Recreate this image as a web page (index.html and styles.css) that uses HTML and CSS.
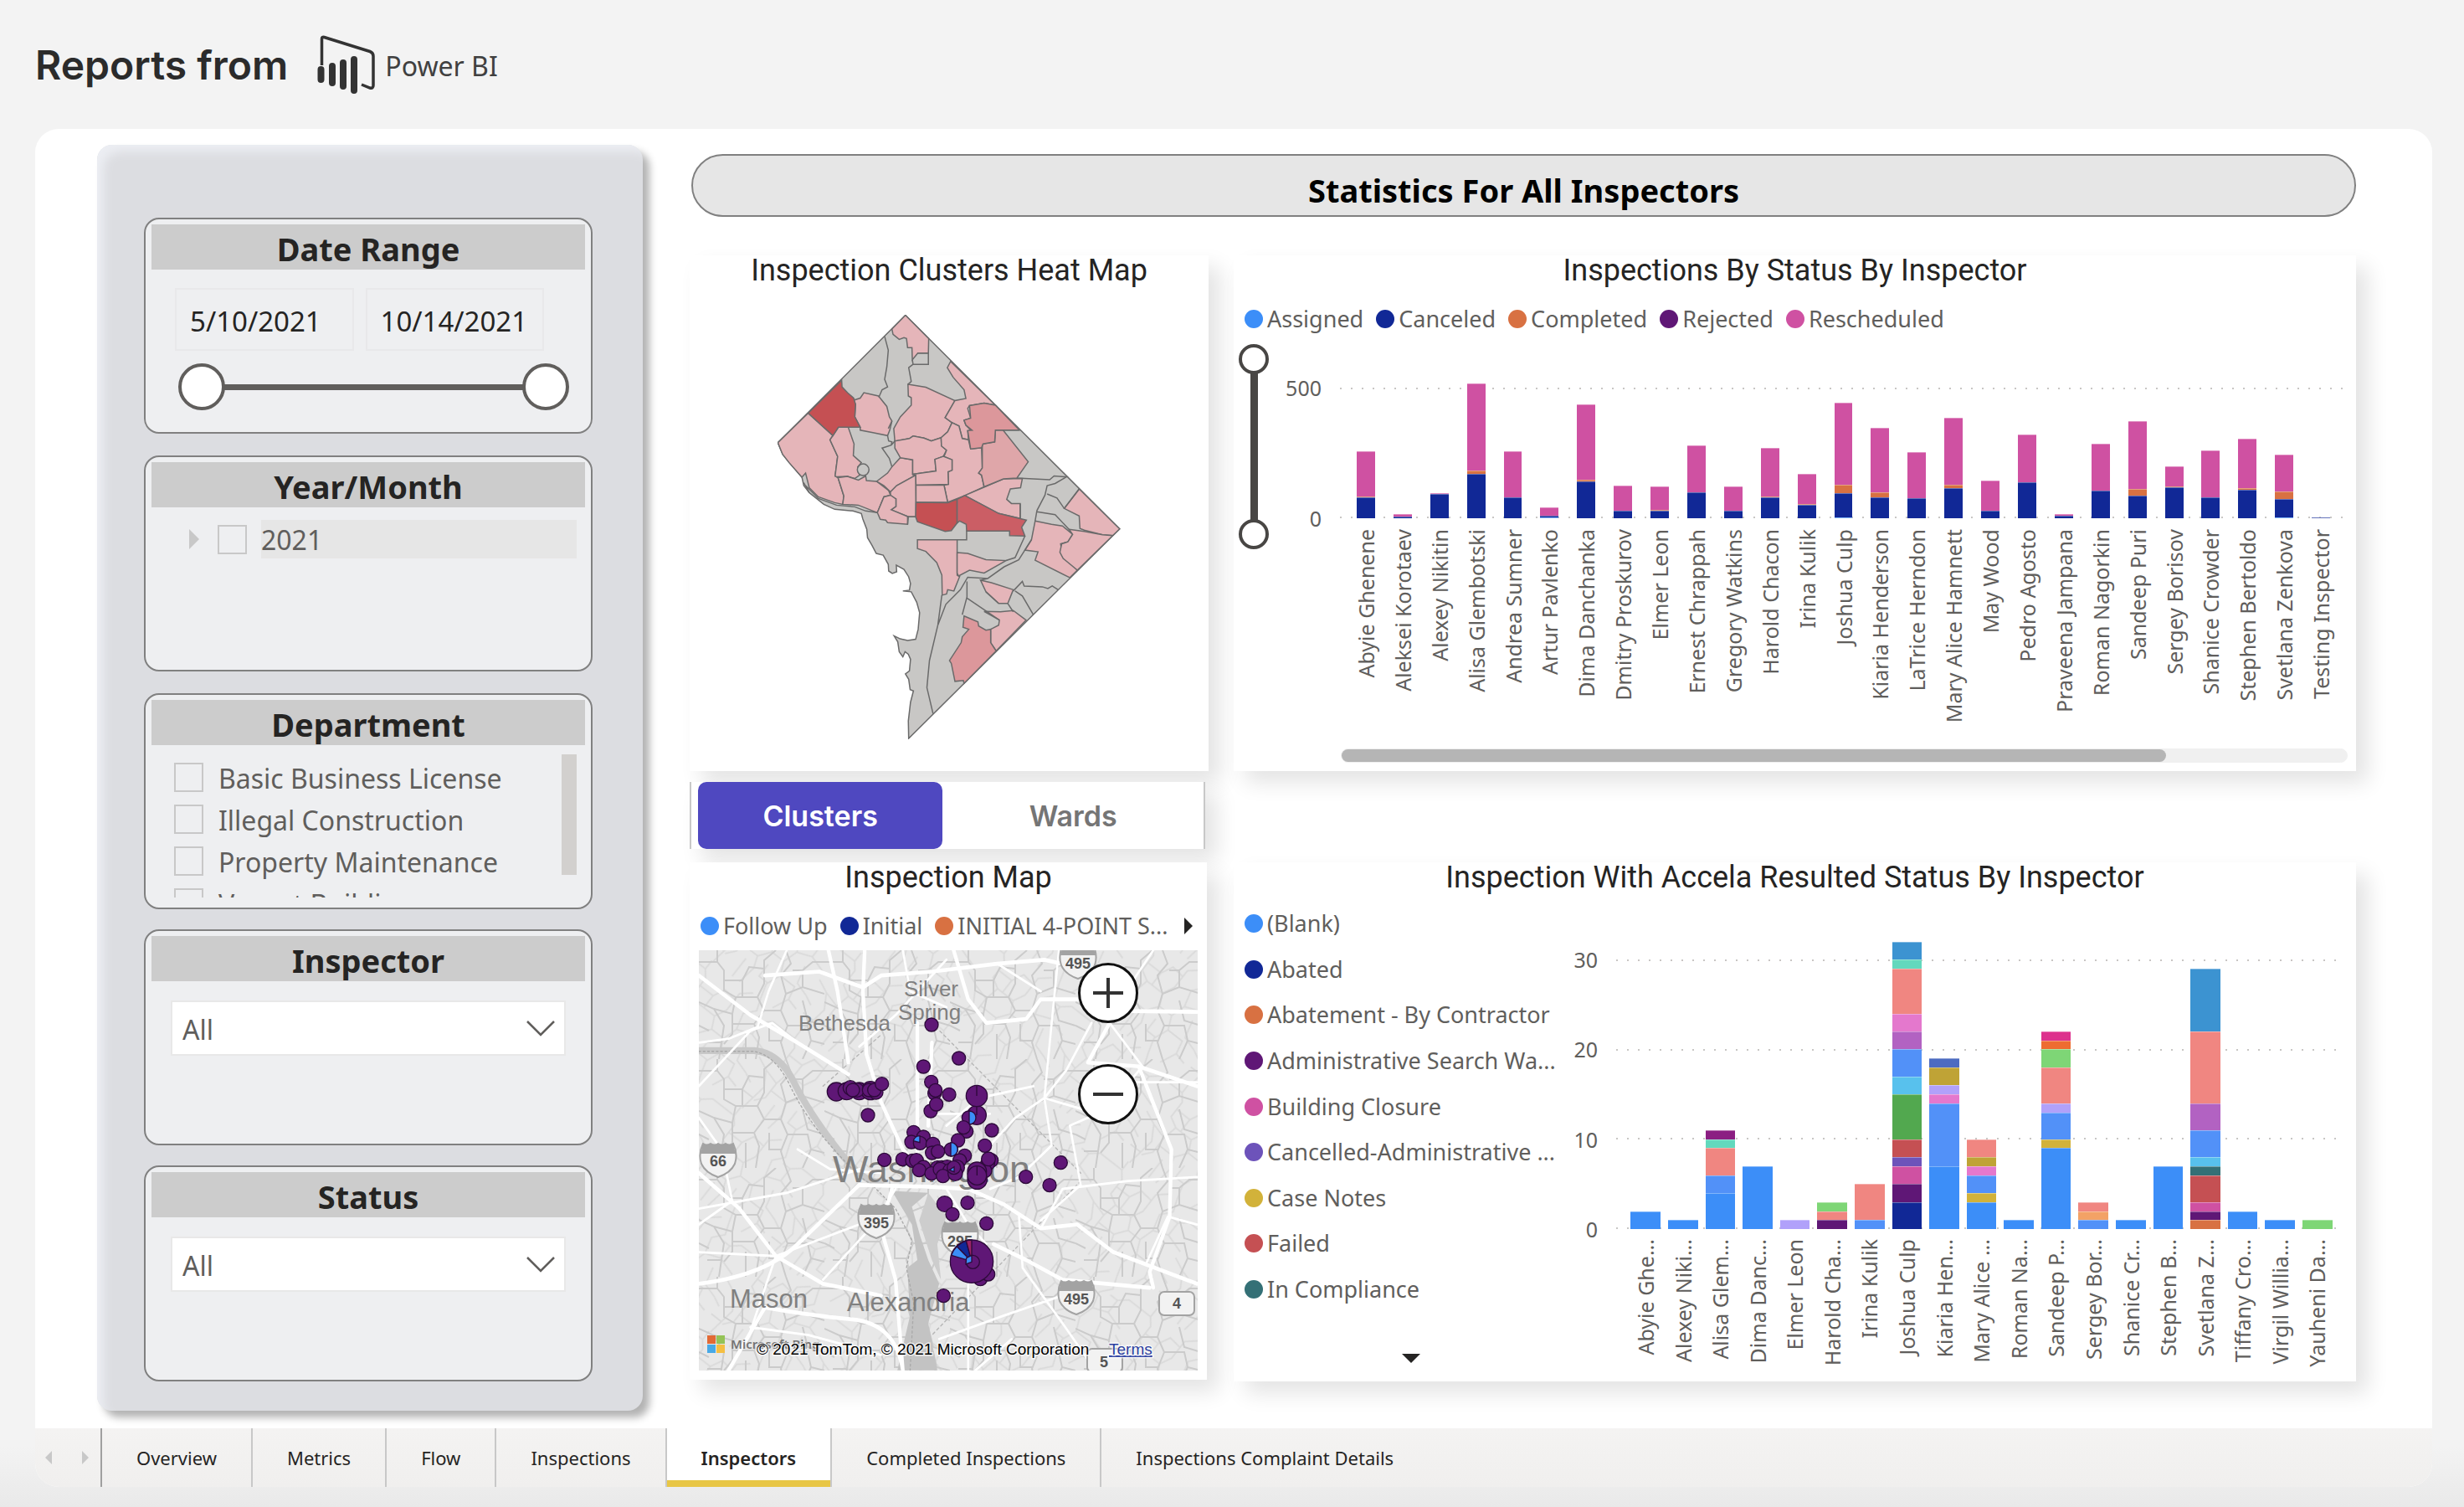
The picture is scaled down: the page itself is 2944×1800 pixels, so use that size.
FILE: index.html
```html
<!DOCTYPE html>
<html lang="en">
<head>
<meta charset="utf-8">
<meta name="viewport" content="width=device-width, initial-scale=1">
<title>Reports from Power BI</title>
<link rel="stylesheet" href="styles.css">
</head>
<body>
<header class="page-header">
  <h1>Reports from</h1>
  <div class="brand">
    <svg class="brand-logo" width="72" height="72" viewBox="0 0 72 72" aria-hidden="true">
      <path d="M6.500 36V4.500Q6.500 1.500 9.500 2.500L64 19.500Q68 21 68 25V60Q68 64 64 63L54 59" fill="none" stroke="#333" stroke-width="3.500"/>
      <g stroke="#333" stroke-width="8" stroke-linecap="round">
        <path d="M5.500 41V53M19 37V57M32 33V61M45 29V66"/>
      </g>
    </svg>
    <span>Power BI</span>
  </div>
</header>

<main class="report">
  <div class="canvas">
    <aside class="filters">
      <section class="filter">
        <h2>Date Range</h2>
        <div class="dates">
          <input type="text" value="5/10/2021" aria-label="Start date">
          <input type="text" value="10/14/2021" aria-label="End date">
        </div>
        <div class="range range-wide">
          <input type="range" min="0" max="100" value="0" aria-label="Range start">
          <input type="range" min="0" max="100" value="100" aria-label="Range end">
        </div>
      </section>

      <section class="filter">
        <h2>Year/Month</h2>
        <div class="tree-row">
          <button type="button" class="expander" aria-label="Expand 2021"></button>
          <input type="checkbox" id="y2021">
          <label for="y2021">2021</label>
        </div>
      </section>

      <section class="filter">
        <h2>Department</h2>
        <div class="dept">
          <ul>
            <li><input type="checkbox" id="d1"><label for="d1">Basic Business License</label></li>
            <li><input type="checkbox" id="d2"><label for="d2">Illegal Construction</label></li>
            <li><input type="checkbox" id="d3"><label for="d3">Property Maintenance</label></li>
            <li><input type="checkbox" id="d4"><label for="d4">Vacant Building</label></li>
          </ul>
          <div class="dept-scroll"></div>
        </div>
      </section>

      <section class="filter filter-tight">
        <h2 id="inspector-title">Inspector</h2>
        <div class="dropdown">
          <select aria-labelledby="inspector-title"><option>All</option></select>
          <svg width="36" height="20" viewBox="0 0 36 20" aria-hidden="true"><path d="M2 2L18 18L34 2" fill="none" stroke="#605e5c" stroke-width="2.500"/></svg>
        </div>
      </section>

      <section class="filter filter-tight">
        <h2 id="status-title">Status</h2>
        <div class="dropdown">
          <select aria-labelledby="status-title"><option>All</option></select>
          <svg width="36" height="20" viewBox="0 0 36 20" aria-hidden="true"><path d="M2 2L18 18L34 2" fill="none" stroke="#605e5c" stroke-width="2.500"/></svg>
        </div>
      </section>
    </aside>

    <div class="dashboard">
      <div class="banner">Statistics For All Inspectors</div>

      <div class="columns">
        <div class="column">
          <section class="card heat">
            <h3>Inspection Clusters Heat Map</h3>
            <svg class="heat-map" viewBox="278 435 940 1019" preserveAspectRatio="none" role="img" aria-label="Clusters heat map">
              <path class="base" d="M629 436L1217 949L638 1452L637 1410L643 1365L651 1338L642 1335L638 1310L629 1297L640 1290L643 1262L637 1250L628 1244L622 1256L612 1244L608 1220L598 1206L615 1213L635 1217L657 1214L664 1190L668 1150L660 1125L645 1100L622 1098L640 1096L643 1080L638 1064L625 1046L604 1036L605 1052L593 1056L583 1050L582 1034L568 1012L549 1008L537 988L525 970L523 950L512 925L508 912L485 906L435 902L405 890L365 862L350 845L345 825L310 790L292 770L279 742Z"/>
              <g class="low">
                <path d="M629 436L693 492L692 527L663 527L648 543L647 514L635 514L632 492L625 490L612 494L595 482L592 469Z"/>
                <path d="M636 602L685 609L765 641L738 682L757 694L745 716L727 730L700 738L680 731L650 726L640 732L606 738L600 738L597 708L615 680L645 652V634L637 630Z"/>
                <path d="M753 547L876 652L845 647L805 653L800 660L808 683L790 688L795 700L808 712L800 713L802 735L785 732L776 702L757 694L738 682L765 641L795 636L790 615L760 585L744 562Z"/>
                <path d="M487 640L505 635L515 622L555 630L578 655L585 680L592 690L586 712L580 725L540 718L505 712V705L490 680L492 650Z"/>
                <path d="M362 671L430 725L422 735L443 775L436 822L444 826L460 870L457 890L435 886L390 872L365 850L355 815L345 825L310 790L292 770L279 742Z"/>
                <path d="M430 725L445 705H472L488 745L486 773L508 790L498 800L503 820L490 828L470 823L440 824L436 822L443 775L422 735Z"/>
                <path d="M444 826L470 823L500 832L520 822L522 833L550 835L583 857L588 868L570 872L552 910L500 892L457 890L460 870Z"/>
                <path d="M550 835L580 815L592 800L615 778L649 783V818L657 820L605 845L588 860L570 845Z"/>
                <path d="M600 738L640 732L650 726L680 731L700 738L727 730L728 750L742 760L733 775L710 782L713 810L649 818V783L615 778L600 755Z"/>
                <path d="M727 730L745 716L757 694L776 702L785 732L802 735L808 757L838 754L840 803L830 815L838 820L845 848L792 869L745 885L735 844L747 842L746 812L757 808V783L735 775L742 760L728 750Z"/>
                <path d="M649 818L713 810L710 782L733 775L757 783V808L746 812L747 842L658 844L657 820Z"/>
                <path d="M658 844H735L745 885H658Z"/>
                <path d="M657 820L658 920H637L590 903L603 895V877L588 873L588 860L605 845Z"/>
                <path d="M588 868L603 877V895L590 903L637 920L635 938L580 934L575 928L560 926L552 910L570 872Z"/>
                <path d="M792 869L898 829L950 828L945 850L917 853L907 878L920 888L944 888V924L885 912Z"/>
                <path d="M662 975H771V1060L778 1063L762 1098L745 1095L742 1105L730 1108L729 1060L715 1030L685 1003L662 996Z"/>
                <path d="M771 1006L800 1008L850 1023L905 1025L845 1055L805 1048L775 1062L771 1055Z"/>
                <path d="M1106 853L1217 949L1198 965L1170 963L1120 952L1108 948L1106 918L1065 900Z"/>
                <path d="M985 930L1030 938L1060 942L1088 962L1075 980L1055 985L1060 1010L1101 1048L1080 1066L985 1024L993 1004L957 1000L975 975Z"/>
                <path d="M1078 950L1120 955L1170 963L1198 965L1101 1048L1062 1020L1053 1005L1058 985L1075 980L1088 962Z"/>
                <path d="M835 1072L865 1078L925 1095L910 1128H885L850 1100Z"/>
                <path d="M845 1147L890 1148L925 1145L960 1168L878 1242L863 1222V1190L885 1180L887 1168Z"/>
              </g>
              <path class="mid" d="M876 712H897L966 788L935 827L898 829L845 848L838 820L830 815L840 803V745L874 740Z"/>
              <path class="mid-2" d="M805 653L845 647L876 652L942 712H876L874 740L842 745L838 754L808 757L800 713L812 712L795 700L790 688L808 683Z"/>
              <path class="mid-2" d="M790 1158L828 1172L830 1182L850 1192L863 1190V1222L878 1242L790 1320L788 1313L765 1315L755 1272L750 1265L782 1222L785 1208L803 1190L787 1185Z"/>
              <path class="high" d="M454 592L455 608L470 622L487 635L492 650L490 680L505 705H445L430 725L362 671Z"/>
              <path class="high" d="M658 885L745 886L771 878V935L755 953L738 955L662 932L657 920Z"/>
              <path class="high-2" d="M771 878L792 869L885 912L961 928L948 945L957 966L915 965V954H797L796 938L778 930L771 935Z"/>
              <path class="line" d="M663 527L692 527V554H650L648 543M572 487L582 520L578 560L572 590L580 608L565 615L556 633M650 554L638 562L645 595L636 602M580 725L583 738L592 740L590 748L565 755L585 780L592 800M600 738L590 748M592 690L582 708M897 712H942M935 827L1025 831L1037 822L1071 824L1040 840L1018 845L1012 868L990 905L985 930M1018 865L1045 875L1065 900M1106 853L1065 900M990 908L1040 915L1078 950M797 954V975H771M957 966L930 1018L905 1025M975 975L940 1023L900 1040L855 1068L800 1065L780 1095L740 1130L718 1180M798 1075V1112L785 1155M798 1115L887 1168M855 1068L835 1072M925 1098L950 1075L955 1086L1005 1088L1020 1092L1032 1086L1048 1095M930 1098L950 1110L980 1155M910 1128L925 1148M850 1100L885 1128M729 1108L718 1180L695 1265L688 1330L705 1393M944 888V924M365 862L350 838M355 845L390 876L440 892L490 896L520 906L552 910M635 938V920H658"/>
              <ellipse class="base" cx="513" cy="807" rx="16" ry="14"/>
            </svg>
          </section>

          <div class="card toggle" role="group" aria-label="Map grouping">
            <button type="button" class="is-on" aria-pressed="true">Clusters</button>
            <button type="button" aria-pressed="false">Wards</button>
          </div>

          <section class="card map-card">
            <h3>Inspection Map</h3>
            <div class="legend map-legend">
              <span class="key c-blue">Follow Up</span>
              <span class="key c-navy">Initial</span>
              <span class="key c-orange">INITIAL 4-POINT S...</span>
              <button type="button" class="next" aria-label="More legend items"></button>
            </div>
            <div class="map">
              <svg viewBox="0 0 596 502" role="img" aria-label="Map of inspections around Washington">
                <defs>
                  <pattern id="streets" width="150" height="130" patternUnits="userSpaceOnUse">
                    <path d="M0 14H22L30 24V48L44 56H70L78 40V12L92 0M22 14V0M30 36H52V56M52 36L60 20L78 22M0 62L18 70L30 90L24 130M18 70L40 76L44 56M40 76V100L30 112M40 88H66L72 104L68 130M66 88L78 72L70 56M78 72H98L106 90L98 110L104 130M98 72L104 52L124 44L150 52M104 52L98 30L110 16L104 0M124 44V24L136 14H150M124 60L130 84L150 90M106 90H130L134 108L150 112M134 108L124 130M84 88V108H98M0 90L12 96M10 110H27M112 24H124M56 100V130" fill="none" stroke="#cbcbcb" stroke-width="2"/>
                  </pattern>
                  <pattern id="lanes" href="#streets" patternTransform="rotate(38) scale(.9)"/>
                  <g id="interstate">
                    <path d="M-18 -20Q-14 -17 -9 -20Q-4 -17 0 -20Q4 -17 9 -20Q14 -17 18 -20Q24 -8 20 4Q15 15 0 20Q-15 15 -20 4Q-24 -8 -18 -20Z" fill="#f2f2f2" stroke="#a3a3a3" stroke-width="2"/>
                    <path d="M-18 -20Q-14 -17 -9 -20Q-4 -17 0 -20Q4 -17 9 -20Q14 -17 18 -20L21 -8H-21Z" fill="#a3a3a3"/>
                  </g>
                </defs>
                <rect width="596" height="502" fill="#e8e8e8"/>
                <rect width="596" height="502" fill="url(#streets)"/>
                <rect width="596" height="502" fill="url(#lanes)" opacity=".5"/>
                <g transform="scale(.43367 .47194) translate(-58 -456)" fill="none" stroke-linecap="round" stroke-linejoin="round">
                  <path d="M58 710H210Q280 715 320 790T440 960T560 1040" stroke="#c8c8c8" stroke-width="18"/>
                  <path d="M590 1065L690 1070L645 1105L668 1180L690 1240L720 1300L690 1400L715 1519H605L640 1380L632 1260L660 1240L645 1150Z" fill="#c3c3c3"/>
                  <path d="M690 1070L740 1130L715 1200L725 1290L700 1240L665 1140Z" fill="#cdcdcd"/>
                  <path d="M58 712H210Q270 722 310 800T430 960T530 1045L600 1110L645 1190L630 1260L650 1350L640 1519" stroke="#a9a9a9" stroke-width="3" stroke-dasharray="5 7"/>
                  <path d="M400 800L560 670M700 640L1110 1020M1110 1040L700 1430" stroke="#b5b5b5" stroke-width="3" stroke-dasharray="7 8"/>
                  <g stroke="#fff" stroke-width="10">
                    <path d="M58 520L200 620L330 690L470 770M415 456L440 560L470 740M515 456L510 560L520 720L560 840L620 960L670 1010M660 640V990M700 690L690 900M58 1020L170 1110L270 1230L400 1300L560 1330M58 1300Q240 1280 330 1200T500 1050L700 1055L800 1060L900 1100L1000 1160L1100 1150L1200 1220L1430 1300M590 1060L560 1160L600 1290L620 1519M620 1519Q600 1400 480 1390T240 1360L140 1519"/>
                    <path d="M240 520L390 510L510 550L560 520L700 510L880 490L1010 480L1200 520M760 456L800 580L850 640L960 630L1000 580L1100 580L1250 610L1430 612M1190 640L1130 740L1270 750L1360 960L1355 1130L1300 1270L1310 1310M1270 750L1430 800M870 1200L960 1240L1060 1290L1300 1310"/>
                  </g>
                  <g stroke="#fff" stroke-width="6">
                    <path d="M300 456L250 560L220 650L140 680L58 690M620 456L640 560L740 600M740 480L600 620L500 700M1050 456L1030 640L1010 830M1140 640L1070 760L1010 830L930 880L850 960M1010 830L1120 860L1200 790L1430 790M1010 830L1030 950L940 1030L860 1060M1190 640L1280 750L1180 860L1080 900M1310 456L1220 580M58 880L120 960L150 1090L58 1150M58 1110L300 1070L500 1010M330 960L420 1010L560 1020M58 1220L270 1230L500 1150M270 1230L200 1420M400 1290L540 1150L600 1060M740 1060L800 1150L850 1200M1000 1160L1060 1060L1240 1040L1430 1030M940 1130L950 1260L1060 1400L1150 1519M800 1290V1519M720 1440L900 1380L1060 1330M1430 1150L1350 1130L1290 1250M560 1480L360 1430L200 1410M920 1440L820 1519M58 800L200 660L260 640L330 690M1080 900L1110 1050L1000 1140M880 490L1000 560M700 870H860M740 900L830 830L980 800"/>
                  </g>
                </g>
                <g class="places">
                  <text x="245" y="55" font-size="26">Silver</text>
                  <text x="238" y="83" font-size="26">Spring</text>
                  <text x="119" y="96" font-size="26">Bethesda</text>
                  <text x="160" y="277" font-size="45">Washington</text>
                  <text x="37" y="427" font-size="31">Mason</text>
                  <text x="177" y="431" font-size="31">Alexandria</text>
                </g>
                <use href="#interstate" x="23" y="251"/>
                <use href="#interstate" x="212" y="324"/>
                <use href="#interstate" x="312" y="345"/>
                <use href="#interstate" x="451" y="415"/>
                <use href="#interstate" x="453" y="14"/>
                <rect x="550" y="408" width="42" height="28" rx="6" fill="#f2f2f2" stroke="#a3a3a3" stroke-width="2"/>
                <rect x="464" y="476" width="42" height="28" rx="6" fill="#f2f2f2" stroke="#a3a3a3" stroke-width="2"/>
                <g class="routes">
                  <text x="23" y="258">66</text>
                  <text x="212" y="332">395</text>
                  <text x="312" y="354">295</text>
                  <text x="451" y="423">495</text>
                  <text x="453" y="22">495</text>
                  <text x="571" y="428">4</text>
                  <text x="484" y="498">5</text>
                </g>
                <g class="pins" transform="translate(145 145) scale(.33333)">
                  <circle cx="399" cy="-168" r="24"/><circle cx="497" cy="-48" r="24"/><circle cx="370" cy="-18" r="24"/>
                  <circle cx="58" cy="72" r="33"/><circle cx="95" cy="70" r="31"/><circle cx="140" cy="70" r="31"/><circle cx="180" cy="68" r="33"/><circle cx="200" cy="74" r="25"/><circle cx="108" cy="58" r="26"/><circle cx="132" cy="66" r="25"/><circle cx="175" cy="66" r="24"/><circle cx="194" cy="66" r="24"/><circle cx="117" cy="66" r="24"/><circle cx="221" cy="44" r="24"/><circle cx="171" cy="156" r="24"/>
                  <circle cx="398" cy="37" r="24"/><circle cx="410" cy="78" r="24"/><circle cx="413" cy="67" r="24"/><circle cx="462" cy="82" r="24"/><circle cx="396" cy="141" r="24"/><circle cx="416" cy="117" r="24"/>
                  <circle cx="561" cy="156" r="34"/><path d="M561 156V122"/><circle cx="561" cy="87" r="38"/><path d="M561 87V49"/>
                  <circle cx="532" cy="165" r="24"/><path class="blue" d="M534 141A24 24 0 0 1 534 189Z"/>
                  <circle cx="524" cy="214" r="24"/><circle cx="514" cy="200" r="24"/><circle cx="615" cy="210" r="24"/><circle cx="590" cy="265" r="24"/><circle cx="494" cy="246" r="24"/>
                  <circle cx="335" cy="217" r="24"/><circle cx="370" cy="234" r="24"/><circle cx="327" cy="252" r="24"/><circle cx="358" cy="256" r="24"/><path class="blue" d="M357 254V230A24 24 0 0 0 334 248Z"/>
                  <circle cx="404" cy="260" r="25"/><circle cx="401" cy="291" r="24"/><circle cx="422" cy="286" r="24"/><circle cx="469" cy="279" r="24"/><path class="blue" d="M468 254A24 24 0 0 1 468 303Z"/>
                  <circle cx="230" cy="316" r="24"/><circle cx="295" cy="314" r="24"/><circle cx="330" cy="319" r="24"/><circle cx="345" cy="318" r="25"/><circle cx="370" cy="343" r="25"/><circle cx="355" cy="353" r="24"/>
                  <circle cx="518" cy="301" r="24"/><circle cx="500" cy="318" r="24"/><circle cx="420" cy="345" r="25"/><circle cx="436" cy="346" r="27"/><circle cx="455" cy="344" r="27"/><circle cx="490" cy="344" r="27"/><circle cx="399" cy="365" r="24"/><circle cx="430" cy="350" r="25"/><circle cx="465" cy="354" r="25"/><circle cx="440" cy="374" r="24"/><circle cx="484" cy="365" r="26"/><circle cx="479" cy="344" r="24"/><path class="blue" d="M480 359V341L463 352Z"/>
                  <circle cx="613" cy="318" r="25"/><circle cx="600" cy="330" r="25"/><circle cx="590" cy="355" r="25"/><circle cx="603" cy="313" r="25"/>
                  <circle cx="562" cy="358" r="34"/><circle cx="563" cy="386" r="35"/><circle cx="562" cy="372" r="34"/><path d="M562 372V340"/>
                  <circle cx="862" cy="326" r="24"/><circle cx="737" cy="377" r="24"/><circle cx="822" cy="407" r="24"/>
                  <circle cx="446" cy="474" r="28"/><circle cx="528" cy="470" r="24"/><circle cx="474" cy="511" r="24"/><circle cx="596" cy="544" r="24"/>
                  <circle cx="574" cy="742" r="25"/><circle cx="602" cy="726" r="24"/>
                  <circle cx="543" cy="680" r="77"/>
                  <path class="blue" d="M543 680L470 658A77 77 0 0 1 490 626Z"/>
                  <path class="navy" d="M543 680L490 626A77 77 0 0 1 523 606Z"/>
                  <path class="wine" d="M543 680L523 606A77 77 0 0 1 543 603Z"/>
                  <circle cx="547" cy="682" r="24"/><path class="blue" d="M543 682V658L524 668L522 690Z"/>
                  <circle cx="442" cy="803" r="24"/>
                </g>
                <rect x="10" y="460" width="10" height="10" fill="#e26a35"/><rect x="21" y="460" width="10" height="10" fill="#94c356"/>
                <rect x="10" y="471" width="10" height="10" fill="#48a9e6"/><rect x="21" y="471" width="10" height="10" fill="#f5bf42"/>
                <text class="bing" x="38" y="476">Microsoft Bing</text>
                <text class="credit" x="69" y="483">© 2021 TomTom, © 2021 Microsoft Corporation</text>
                <a href="#terms"><text class="terms" x="490" y="483">Terms</text></a>
              </svg>
              <div class="zoom">
                <button type="button" aria-label="Zoom in"><svg width="40" height="40" viewBox="0 0 40 40" aria-hidden="true"><path d="M2 20H38M20 2V38" stroke="#333" stroke-width="4"/></svg></button>
                <button type="button" aria-label="Zoom out"><svg width="40" height="40" viewBox="0 0 40 40" aria-hidden="true"><path d="M2 20H38" stroke="#333" stroke-width="4"/></svg></button>
              </div>
            </div>
          </section>
        </div>

        <div class="column column-right">
          <section class="card status-card">
            <h3>Inspections By Status By Inspector</h3>
            <div class="legend">
              <span class="key c-blue">Assigned</span>
              <span class="key c-navy">Canceled</span>
              <span class="key c-orange">Completed</span>
              <span class="key c-purple">Rejected</span>
              <span class="key c-pink">Rescheduled</span>
            </div>
            <div class="status-body">
              <div class="range range-tall">
                <input type="range" min="0" max="100" value="0" aria-label="Axis maximum">
                <input type="range" min="0" max="100" value="100" aria-label="Axis minimum">
              </div>
              <div class="chart" id="status-chart"></div>
            </div>
            <div class="hscroll"><div class="hscroll-thumb"></div></div>
          </section>

          <section class="card result-card">
            <h3>Inspection With Accela Resulted Status By Inspector</h3>
            <div class="result-body">
              <div class="result-legend">
                <ul>
                  <li class="key c-blue">(Blank)</li>
                  <li class="key c-navy">Abated</li>
                  <li class="key c-orange">Abatement - By Contractor</li>
                  <li class="key c-purple">Administrative Search Wa...</li>
                  <li class="key c-pink">Building Closure</li>
                  <li class="key c-violet">Cancelled-Administrative ...</li>
                  <li class="key c-gold">Case Notes</li>
                  <li class="key c-red">Failed</li>
                  <li class="key c-teal">In Compliance</li>
                </ul>
                <button type="button" class="more" aria-label="More legend items"></button>
              </div>
              <div class="chart" id="result-chart"></div>
            </div>
          </section>
        </div>
      </div>
    </div>
  </div>

  <nav class="tabs" aria-label="Report pages">
    <div class="pager">
      <button type="button" class="prev-page" aria-label="Previous page"></button>
      <button type="button" class="next-page" aria-label="Next page"></button>
    </div>
    <a href="#overview">Overview</a>
    <a href="#metrics">Metrics</a>
    <a href="#flow">Flow</a>
    <a href="#inspections">Inspections</a>
    <a href="#inspectors" class="is-current" aria-current="page">Inspectors</a>
    <a href="#completed">Completed Inspections</a>
    <a href="#complaints">Inspections Complaint Details</a>
  </nav>
</main>
<script src="charts.js"></script>
</body>
</html>
```
FILE: styles.css
```css
* { box-sizing: border-box; }

body {
  margin: 0;
  min-height: 100vh;
  padding: 0 38px 24px 42px;
  background: linear-gradient(#f3f3f3 0, #f3f3f3 96%, #e9e9e9 100%);
  font-family: "Noto Sans", "Open Sans", sans-serif;
  color: #252423;
}

h1, h2, h3, ul { margin: 0; padding: 0; }
ul { list-style: none; }
button, input, select { font: inherit; color: inherit; margin: 0; }
button { border: 0; padding: 0; background: none; cursor: pointer; }

.page-header {
  display: flex;
  align-items: center;
  gap: 34px;
  padding: 42px 0 40px;
}
.page-header h1 {
  font: 600 48px/72px Inter, sans-serif;
  color: #2b2b2b;
}
.brand {
  display: flex;
  align-items: center;
  gap: 10px;
  font-size: 32px;
  color: #404040;
}

.report {
  background: #fff;
  border-radius: 28px;
  overflow: hidden;
}
.canvas {
  display: grid;
  grid-template-columns: 652px 1fr;
  gap: 56px;
  padding: 19px 91px 21px 74px;
}

/* Filter pane */
.filters {
  padding: 87px 60px 35px 56px;
  border-radius: 18px;
  background: #dcdde1;
  box-shadow: inset 10px 10px 12px -2px #eceef3, 8px 8px 10px rgba(0, 0, 0, .3);
}
.filter {
  height: 258px;
  padding: 6px 7px;
  border: 2px solid #808080;
  border-radius: 18px;
  background: #eeeff1;
  overflow: hidden;
}
.filter + .filter { margin-top: 26px; }
.filter + .filter-tight { margin-top: 24px; }
.filter h2 {
  height: 54px;
  background: #ccc;
  font-size: 38px;
  font-weight: 700;
  line-height: 58px;
  text-align: center;
}
.dates {
  display: flex;
  gap: 14px;
  padding: 22px 49px 0 28px;
}
.dates input {
  flex: 1;
  min-width: 0;
  height: 75px;
  padding: 4px 16px 0;
  border: 2px solid #e8e8ea;
  background: none;
  font-size: 33px;
}

.range { display: grid; }
.range input {
  grid-area: 1 / 1;
  width: 100%;
  height: 100%;
  appearance: none;
  background: none;
  pointer-events: none;
}
.range input::-webkit-slider-thumb {
  appearance: none;
  border: 4px solid #605e5c;
  border-radius: 50%;
  background: #fff;
  pointer-events: auto;
}
.range-wide {
  height: 56px;
  margin: 15px 19px 0 32px;
  background: linear-gradient(#605e5c, #605e5c) center / calc(100% - 56px) 7px no-repeat;
}
.range-wide input::-webkit-slider-thumb { width: 56px; height: 56px; }

input[type="checkbox"] {
  appearance: none;
  flex: none;
  width: 35px;
  height: 35px;
  border: 2px solid #c8c8c8;
  background: none;
}
.filter label { font-size: 32px; color: #605e5c; }

.tree-row {
  display: flex;
  align-items: center;
  padding: 15px 10px 0 45px;
}
.expander {
  width: 12px;
  height: 24px;
  margin-right: 22px;
  background: #c8c8c8;
  clip-path: polygon(0 0, 100% 50%, 0 100%);
}
.tree-row label {
  flex: 1;
  margin-left: 17px;
  padding-top: 2px;
  line-height: 44px;
  background: #e6e6e6;
}

.dept {
  display: flex;
  justify-content: space-between;
  padding: 11px 10px 0 27px;
}
.dept ul {
  height: 171px;
  padding-top: 2px;
  overflow: hidden;
}
.dept li {
  display: flex;
  align-items: center;
  gap: 18px;
  height: 50px;
}
.dept label { padding-top: 2px; }
.dept-scroll {
  width: 18px;
  height: 144px;
  background: #d2d0ce;
}

.dropdown {
  display: grid;
  align-items: center;
  margin: 23px 23px 0;
}
.dropdown select {
  grid-area: 1 / 1;
  height: 66px;
  padding: 3px 12px 0;
  appearance: none;
  border: 2px solid #e8e8e8;
  border-radius: 0;
  background: #fff;
  font-size: 32px;
  color: #605e5c;
}
.dropdown svg {
  grid-area: 1 / 1;
  justify-self: end;
  margin-right: 12px;
  pointer-events: none;
}

/* Dashboard */
.dashboard {
  display: flex;
  flex-direction: column;
  gap: 46px;
  padding: 11px 0 35px;
}
.banner {
  margin-left: 2px;
  border: 2px solid #808080;
  border-radius: 38px;
  background: #e6e6e6;
  color: #000;
  font-size: 38px;
  font-weight: 700;
  line-height: 71px;
  padding-top: 6px;
  height: 75px;
  text-align: center;
}
.columns {
  flex: 1;
  display: grid;
  grid-template-columns: 620fr 1341fr;
  gap: 30px;
}
.column { display: flex; flex-direction: column; min-width: 0; }
.column-right { justify-content: space-between; }
.card {
  background: #fff;
  box-shadow: 14px 14px 24px rgba(0, 0, 0, .11);
}
.card h3 {
  font: 400 36px/36px Roboto, sans-serif;
  text-align: center;
}

.heat { padding-bottom: 38px; }
.heat-map {
  display: block;
  width: 66%;
  height: 507px;
  margin: 35px auto 0;
  stroke: #6a6a6a;
  stroke-width: 1.500px;
}
.heat-map * { vector-effect: non-scaling-stroke; }
.base { fill: #c8c7c5; }
.low { fill: #e5b5b9; }
.mid { fill: #dfa6a9; }
.mid-2 { fill: #dc979b; }
.high { fill: #c55053; }
.high-2 { fill: #cb5e65; }
.line { fill: none; }

.toggle {
  display: grid;
  grid-template-columns: 15fr 16fr;
  margin: 13px 4px 16px 0;
  padding-left: 8px;
  border: solid #c8c8c8;
  border-width: 0 2px;
}
.toggle button {
  height: 80px;
  padding-top: 2px;
  border-radius: 10px;
  font: 600 34px/78px Inter, sans-serif;
  color: #757575;
}
.toggle .is-on { background: #4f48c0; color: #fff; }

.key {
  display: flex;
  align-items: center;
  gap: 5px;
  font-size: 27px;
  line-height: 38px;
  color: #605e5c;
  white-space: nowrap;
}
.key::before {
  content: "";
  flex: none;
  width: 22px;
  height: 22px;
  border-radius: 50%;
  background: var(--key);
}
.c-blue { --key: #3c8ef8; }
.c-navy { --key: #112896; }
.c-orange { --key: #d87142; }
.c-purple { --key: #5f1776; }
.c-pink { --key: #cf51a2; }
.c-violet { --key: #6d53ba; }
.c-gold { --key: #d2b23a; }
.c-red { --key: #c55053; }
.c-teal { --key: #347076; }

.legend {
  display: flex;
  gap: 15px;
  padding: 21px 13px 0;
}
.map-card {
  margin-right: 2px;
  padding-bottom: 11px;
}
.map-legend { padding-bottom: 10px; align-items: center; }
.next {
  flex: none;
  width: 10px;
  height: 20px;
  margin: 0 4px 0 auto;
  background: #252423;
  clip-path: polygon(0 0, 100% 50%, 0 100%);
}
.map {
  position: relative;
  margin: 0 11px;
}
.map > svg { display: block; width: 100%; }
.places { fill: #808080; font-family: "Liberation Sans", sans-serif; }
.routes {
  fill: #555;
  font: 700 18px "Liberation Sans", sans-serif;
  text-anchor: middle;
}
.pins { fill: #5f1776; stroke: #2d0a3a; stroke-width: 4; }
.pins .blue { fill: #3c8ef8; }
.pins .navy { fill: #112896; }
.pins .wine { fill: #9b2367; }
.bing { fill: #737373; font: 600 15px "Noto Sans", sans-serif; }
.credit, .terms {
  font: 19px "Liberation Sans", sans-serif;
  stroke: #fff;
  stroke-opacity: .7;
  stroke-width: 3;
  paint-order: stroke;
}
.terms { fill: #2b3fa0; text-decoration: underline; }
.zoom {
  position: absolute;
  top: 15px;
  right: 71px;
  display: flex;
  flex-direction: column;
  gap: 49px;
}
.zoom button {
  display: grid;
  place-items: center;
  width: 72px;
  height: 72px;
  border: 3px solid #111;
  border-radius: 50%;
  background: #fff;
}

/* Charts */
.chart {
  --gap: 22px;
  display: grid;
  grid-template-columns: auto 1fr;
}
.axis {
  display: flex;
  flex-direction: column;
  justify-content: space-between;
  padding-right: var(--gap);
  text-align: right;
}
.axis, .names { font-size: 25px; color: #605e5c; }
.axis span { line-height: 0; }
.stage { display: grid; height: var(--stage); }
.lines, .bars { grid-area: 1 / 1; display: flex; }
.lines { flex-direction: column; justify-content: space-between; }
.lines i {
  height: 2px;
  background: repeating-linear-gradient(90deg, #c8c6c4 0 2px, transparent 2px 13px);
}
.bars, .names { padding: 0 var(--end) 0 var(--start); min-height: 0; }
.bar {
  flex: 1;
  display: flex;
  flex-direction: column-reverse;
  align-items: center;
  min-height: 0;
}
.bar i {
  flex: none;
  width: var(--bar);
  border-top: 1px solid rgba(255, 255, 255, .35);
}
.names {
  grid-column: 2;
  display: flex;
  align-items: flex-start;
}
.names span {
  flex: 1;
  display: flex;
  align-items: center;
  min-width: 0;
  writing-mode: vertical-rl;
  transform: rotate(180deg);
  white-space: nowrap;
}

.status-body {
  display: grid;
  grid-template-columns: 36px 1fr;
  height: 494px;
  padding: 11px 10px 0 6px;
}
.status-body .chart {
  --stage: 156px;
  --start: 9px;
  --end: 10px;
  --bar: 50%;
  align-content: start;
  padding-top: 52px;
}
.status-body .axis { width: 85px; }
.status-body .names { padding-top: 13px; }
.range-tall {
  width: 36px;
  height: 245px;
  background: linear-gradient(#484644, #484644) center / 9px calc(100% - 36px) no-repeat;
}
.range-tall input { writing-mode: vertical-lr; }
.range-tall input::-webkit-slider-thumb { width: 36px; height: 36px; border-color: #484644; }
.hscroll {
  margin: 0 10px 10px 128px;
  border: 1px solid #f0f0f0;
  border-radius: 9px;
  background: #f0f0f0;
}
.hscroll-thumb {
  width: 82%;
  height: 15px;
  border-radius: 8px;
  background: #b5b5b5;
}

.result-card { height: 620px; }
.result-body {
  display: grid;
  grid-template-columns: 380px 1fr;
  padding: 18px 16px 0 13px;
}
.result-legend ul {
  display: flex;
  flex-direction: column;
  justify-content: space-between;
  height: 475px;
}
.more {
  display: block;
  width: 22px;
  height: 11px;
  margin: 58px 0 0 188px;
  background: #252423;
  clip-path: polygon(0 0, 100% 0, 50% 100%);
}
.result-body .chart {
  --stage: 322px;
  --start: 13px;
  --end: 8px;
  --bar: 80%;
  align-content: start;
  padding-top: 62px;
}
.result-body .axis { width: 64px; }
.result-body .names { padding-top: 12px; }

/* Page tabs */
.tabs {
  display: flex;
  height: 70px;
  background: linear-gradient(#f4f3f2, #f0efee);
  font-size: 22px;
  line-height: 70px;
}
.tabs a {
  padding: 0 41px;
  border-right: 2px solid #c8c8c8;
  color: #252423;
  text-decoration: none;
}
.tabs a:last-child { border-right: 0; }
.tabs .is-current {
  background: #fff;
  font-weight: 600;
  box-shadow: inset 0 -8px #e8c645;
}
.pager {
  display: flex;
  align-items: center;
  gap: 36px;
  padding: 0 14px 0 12px;
  border-right: 2px solid #a0a0a0;
}
.prev-page, .next-page {
  width: 8px;
  height: 16px;
  background: #c8c8c8;
}
.prev-page { clip-path: polygon(100% 0, 100% 100%, 0 50%); }
.next-page { clip-path: polygon(0 0, 100% 50%, 0 100%); }
```
FILE: charts.js
```js
const COLORS = {
  blue: "#3c8ef8", navy: "#112896", orange: "#d87142", purple: "#5f1776",
  pink: "#cf51a2", violet: "#6d53ba", gold: "#d2b23a", red: "#c55053",
  teal: "#347076", azure: "#5291f8", salmon: "#f08681", mint: "#62d8bd",
  plum: "#8b1e82", lavender: "#b1a1fa", green: "#7ed676", steel: "#3c93d1",
  candy: "#e478cd", orchid: "#b262c2", sky: "#58c1ed", forest: "#52a84f",
  indigo: "#4c6bc1", olive: "#bfa336", hot: "#dd318d", flame: "#ee6c31",
  peach: "#f3a266"
};

// Name, then counts for assigned, canceled, completed, rescheduled.
const byStatus = [
  ["Abyie Ghenene", 0, 80, 2, 173], ["Aleksei Korotaev", 0, 5, 0, 11],
  ["Alexey Nikitin", 0, 92, 0, 5], ["Alisa Glembotski", 0, 170, 12, 334],
  ["Andrea Sumner", 0, 80, 0, 175], ["Artur Pavlenko", 3, 8, 0, 30],
  ["Dima Danchanka", 0, 140, 8, 289], ["Dmitry Proskurov", 0, 29, 0, 97],
  ["Elmer Leon", 0, 29, 2, 89], ["Ernest Chrappah", 0, 100, 0, 179],
  ["Gregory Watkins", 0, 29, 0, 92], ["Harold Chacon", 0, 81, 3, 185],
  ["Irina Kulik", 0, 51, 5, 113], ["Joshua Culp", 4, 91, 33, 313],
  ["Kiaria Henderson", 0, 81, 19, 246], ["LaTrice Herndon", 0, 76, 0, 177],
  ["Mary Alice Hamnett", 0, 116, 12, 258], ["May Wood", 0, 29, 0, 114],
  ["Pedro Agosto", 0, 139, 0, 181], ["Praveena Jampana", 0, 10, 0, 6],
  ["Roman Nagorkin", 0, 105, 0, 179], ["Sandeep Puri", 0, 88, 23, 262],
  ["Sergey Borisov", 0, 118, 3, 78], ["Shanice Crowder", 0, 81, 0, 179],
  ["Stephen Bertoldo", 0, 108, 7, 191], ["Svetlana Zenkova", 3, 69, 30, 142],
  ["Testing Inspector", 0, 2, 0, 0]
].map(([name, a, c, d, r]) => [name, [["blue", a], ["navy", c], ["orange", d], ["pink", r]]]);

const byResult = [
  ["Abyie Ghe...", "blue 2"],
  ["Alexey Niki...", "blue 1"],
  ["Alisa Glem...", "blue 4,azure 2,salmon 3,mint 1,plum 1"],
  ["Dima Danc...", "blue 7"],
  ["Elmer Leon", "lavender 1"],
  ["Harold Cha...", "purple 1,salmon 1,green 1"],
  ["Irina Kulik", "azure 1,salmon 4"],
  ["Joshua Culp", "navy 3,purple 2,pink 2,violet 1,red 2,forest 5,sky 2,azure 3,orchid 2,candy 2,salmon 5,mint 1,steel 2"],
  ["Kiaria Hen...", "blue 7,azure 7,candy 1,lavender 1,olive 2,indigo 1"],
  ["Mary Alice ...", "blue 3,gold 1,azure 2,candy 1,olive 1,salmon 2"],
  ["Roman Na...", "blue 1"],
  ["Sandeep P...", "blue 9,gold 1,azure 3,lavender 1,salmon 4,green 2,flame 1,hot 1"],
  ["Sergey Bor...", "azure 1,peach 1,salmon 1"],
  ["Shanice Cr...", "blue 1"],
  ["Stephen B...", "blue 7"],
  ["Svetlana Z...", "orange 1,purple 1,pink 1,red 3,teal 1,sky 1,azure 3,orchid 3,salmon 8,steel 7"],
  ["Tiffany Cro...", "blue 2"],
  ["Virgil Willia...", "blue 1"],
  ["Yauheni Da...", "green 1"]
].map(([name, parts]) => [name, parts.split(",").map(p => p.split(" "))]);

function draw(id, rows, ticks) {
  const top = ticks[0];
  const bars = rows.map(([, parts]) => `<div class="bar">${parts
    .filter(([, n]) => n > 0)
    .map(([c, n]) => `<i style="height:${n / top * 100}%;background-color:${COLORS[c]}"></i>`)
    .join("")}</div>`).join("");
  document.getElementById(id).innerHTML = `
    <div class="axis">${ticks.map(t => `<span>${t}</span>`).join("")}</div>
    <div class="stage">
      <div class="lines">${ticks.map(() => "<i></i>").join("")}</div>
      <div class="bars">${bars}</div>
    </div>
    <div class="names">${rows.map(([name]) => `<span>${name}</span>`).join("")}</div>`;
}

draw("status-chart", byStatus, [500, 0]);
draw("result-chart", byResult, [30, 20, 10, 0]);
```
